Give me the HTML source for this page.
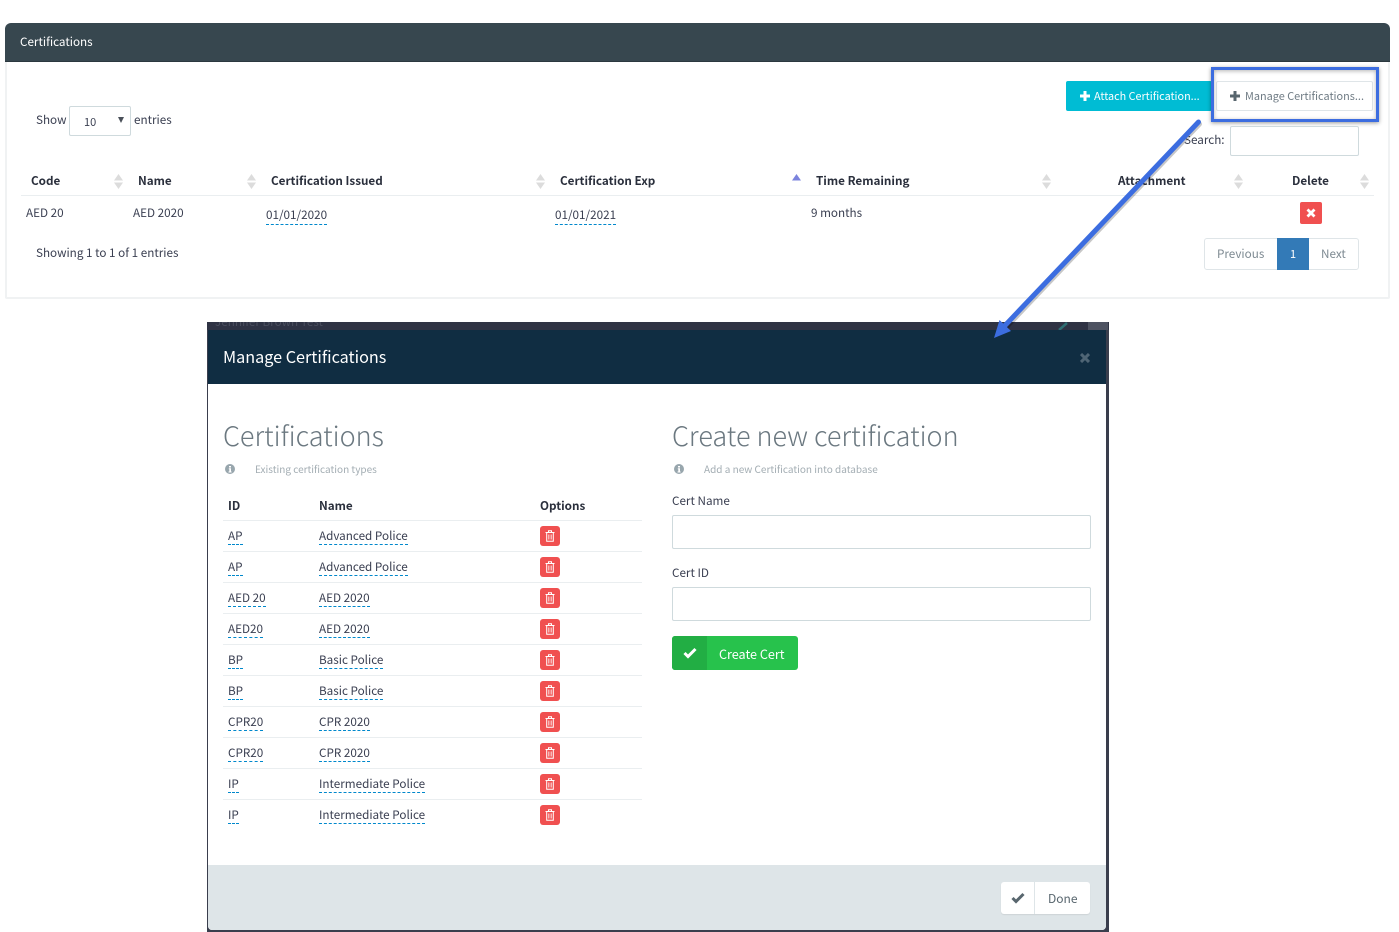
<!DOCTYPE html>
<html><head><meta charset="utf-8"><title>Certifications</title>
<style>
html,body{margin:0;padding:0;background:#fff;width:1399px;height:932px;overflow:hidden}
body{position:relative;font-family:"Noto Sans CJK SC","Liberation Sans",sans-serif;font-size:11.7px;color:#3a3f51}
.a{position:absolute;box-sizing:border-box}
.t{position:absolute;white-space:nowrap;line-height:18px;height:18px}
.b{font-weight:700;color:#2a2f3c}
.u{border-bottom:1px dashed #0088cc;height:18px}
.v{line-height:17px;height:17px}
.l{position:absolute;height:1px;background:#eaeef0}
.g{color:#a3adb3;font-size:10px}
.h{font-size:27px;line-height:40px;height:40px;color:#6b7880;font-weight:300}
.tr{position:absolute;left:540px;width:20px;height:20px;background:#f05050;border-radius:3px}
svg{position:absolute;display:block}
</style></head><body>

<div class="a" style="left:5px;top:23px;width:1385px;height:276px;border:2px solid #f0f2f3;border-top:0;border-radius:6px 6px 2px 2px"></div>
<div class="a" style="left:5px;top:23px;width:1385px;height:39px;background:#37474f;border-radius:6px 6px 0 0;border-bottom:1px solid #2b383f"></div>
<div class="t" style="left:20px;top:32.500px;color:#fff">Certifications</div>

<div class="t" style="left:36px;top:110.500px">Show</div>
<div class="a" style="left:69px;top:106px;width:62px;height:30px;border:1px solid #cfdadd;border-radius:2px"></div>
<div class="t" style="left:84px;top:113px;font-size:11px">10</div>
<svg style="left:118px;top:117px" width="7" height="7"><path d="M0 0H6L3 6Z" fill="#4a5059"/></svg>
<div class="t" style="left:134px;top:110.500px">entries</div>

<div class="a" style="left:1066px;top:81px;width:146px;height:30px;background:#00bcd4;border-radius:2px"></div>
<svg style="left:1080px;top:91px" width="10" height="10"><path d="M3.500 0H6.500V3.500H10V6.500H6.500V10H3.500V6.500H0V3.500H3.500Z" fill="#fff"/></svg>
<div class="t" style="left:1094px;top:87px;color:#fff;font-size:10.800px">Attach Certification...</div>
<div class="a" style="left:1216px;top:81px;width:157px;height:30px;background:#fff;border:1px solid #dfe5e8;border-radius:2px"></div>
<svg style="left:1230px;top:91px" width="10" height="10"><path d="M3.500 0H6.500V3.500H10V6.500H6.500V10H3.500V6.500H0V3.500H3.500Z" fill="#58666e"/></svg>
<div class="t" style="left:1245px;top:87px;color:#6f7b84;font-size:10.900px">Manage Certifications...</div>
<div class="a" style="left:1211px;top:67px;width:168px;height:55px;border:3px solid #3c6de0;box-shadow:0 1px 4px rgba(0,0,0,.4),inset 0 1px 4px rgba(0,0,0,.3)"></div>

<div class="t" style="left:1184px;top:130.500px">Search:</div>
<div class="a" style="left:1230px;top:126px;width:129px;height:30px;border:1px solid #cfdadd;border-radius:2px"></div>

<div class="t b" style="left:31px;top:171.500px">Code</div>
<div class="t b" style="left:138px;top:171.500px">Name</div>
<div class="t b" style="left:271px;top:171.500px">Certification Issued</div>
<div class="t b" style="left:560px;top:171.500px">Certification Exp</div>
<div class="t b" style="left:816px;top:171.500px">Time Remaining</div>
<div class="t b" style="left:1118px;top:171.500px">Attachment</div>
<div class="t b" style="left:1292px;top:171.500px">Delete</div>
<svg style="left:114px;top:174px" width="9" height="15"><path d="M4.500 0L9 6.500H0ZM0 8.500H9L4.500 15Z" fill="#dcdcdc"/></svg>
<svg style="left:247px;top:174px" width="9" height="15"><path d="M4.500 0L9 6.500H0ZM0 8.500H9L4.500 15Z" fill="#dcdcdc"/></svg>
<svg style="left:536px;top:174px" width="9" height="15"><path d="M4.500 0L9 6.500H0ZM0 8.500H9L4.500 15Z" fill="#dcdcdc"/></svg>
<svg style="left:792px;top:174px" width="9" height="7"><path d="M4.500 0L9 6.500H0Z" fill="#7b83dd"/></svg>
<svg style="left:1042px;top:174px" width="9" height="15"><path d="M4.500 0L9 6.500H0ZM0 8.500H9L4.500 15Z" fill="#dcdcdc"/></svg>
<svg style="left:1234px;top:174px" width="9" height="15"><path d="M4.500 0L9 6.500H0ZM0 8.500H9L4.500 15Z" fill="#dcdcdc"/></svg>
<svg style="left:1360px;top:174px" width="9" height="15"><path d="M4.500 0L9 6.500H0ZM0 8.500H9L4.500 15Z" fill="#dcdcdc"/></svg>
<div class="l" style="left:21px;top:195px;width:1353px"></div>

<div class="t" style="left:26px;top:203.500px">AED 20</div>
<div class="t" style="left:133px;top:203.500px">AED 2020</div>
<div class="t u" style="left:266px;top:206px">01/01/2020</div>
<div class="t u" style="left:555px;top:206px">01/01/2021</div>
<div class="t" style="left:811px;top:203.500px">9 months</div>
<div class="a" style="left:1300px;top:202px;width:22px;height:22px;background:#f05050;border-radius:2px"></div>
<svg style="left:1306px;top:208px" width="10" height="10"><path d="M1.500 1.500L8.500 8.500M8.500 1.500L1.500 8.500" stroke="#fff" stroke-width="2.800" fill="none"/></svg>
<div class="t" style="left:36px;top:243.500px">Showing 1 to 1 of 1 entries</div>

<div class="a" style="left:1204px;top:238px;width:155px;height:32px;border:1px solid #dfe5e8;border-radius:3px"></div>
<div class="t" style="left:1217px;top:244.500px;color:#7e8a92">Previous</div>
<div class="a" style="left:1277px;top:238px;width:32px;height:32px;background:#337ab7"></div>
<div class="t" style="left:1290px;top:245px;color:#fff;font-size:11px">1</div>
<div class="t" style="left:1321px;top:244.500px;color:#7e8a92">Next</div>

<!-- Modal -->
<div class="a" style="left:207px;top:322px;width:902px;height:610px;background:#3a3e4d"></div>
<div class="a" style="left:207px;top:322px;width:902px;height:8px;background:#2f3344;overflow:hidden"><div class="t" style="left:8px;top:-9px;color:#4a4e5e;font-size:11.700px">Jennifer Brown Test</div></div>
<div class="a" style="left:1088px;top:322px;width:20px;height:8px;background:#4d5261"></div>
<svg style="left:1058px;top:322px" width="14" height="8"><path d="M1 8L9 1" stroke="#2f6f73" stroke-width="2.500"/></svg>
<div class="a" style="left:208px;top:330px;width:898px;height:600px;background:#fff;border-radius:0 0 4px 4px;overflow:hidden">
  <div class="a" style="left:0;top:0;width:898px;height:54px;background:#102d42"></div>
  <div class="a" style="left:0;top:535px;width:898px;height:65px;background:#dee5e8"></div>
</div>
<div class="t" style="left:223px;top:343px;height:26px;line-height:26px;color:#fff;font-size:16.200px">Manage Certifications</div>
<svg style="left:1080px;top:353px" width="10" height="10"><path d="M1 1L9 9M9 1L1 9" stroke="#4f6575" stroke-width="3" fill="none"/></svg>

<div class="t h" style="left:223px;top:415px">Certifications</div>
<svg style="left:225px;top:464px" width="10" height="10"><circle cx="5" cy="5" r="5" fill="#98a6ad"/><path d="M4 2h2v1.500H4zM3.800 4.300H6V7.500h.6V8.500H3.500V7.500h.8V5.300H3.800z" fill="#fff"/></svg>
<div class="t g" style="left:255px;top:460px">Existing certification types</div>

<div class="t b" style="left:228px;top:496.500px">ID</div>
<div class="t b" style="left:319px;top:496.500px">Name</div>
<div class="t b" style="left:540px;top:496.500px">Options</div>
<div class="l" style="left:223px;top:520px;width:419px"></div>
<div class="l" style="left:223px;top:551px;width:419px"></div>
<div class="l" style="left:223px;top:582px;width:419px"></div>
<div class="l" style="left:223px;top:613px;width:419px"></div>
<div class="l" style="left:223px;top:644px;width:419px"></div>
<div class="l" style="left:223px;top:675px;width:419px"></div>
<div class="l" style="left:223px;top:706px;width:419px"></div>
<div class="l" style="left:223px;top:737px;width:419px"></div>
<div class="l" style="left:223px;top:768px;width:419px"></div>
<div class="l" style="left:223px;top:799px;width:419px"></div>

<div class="t u v" style="left:228px;top:527px">AP</div><div class="t u v" style="left:319px;top:527px">Advanced Police</div>
<div class="t u v" style="left:228px;top:558px">AP</div><div class="t u v" style="left:319px;top:558px">Advanced Police</div>
<div class="t u v" style="left:228px;top:589px">AED 20</div><div class="t u v" style="left:319px;top:589px">AED 2020</div>
<div class="t u v" style="left:228px;top:620px">AED20</div><div class="t u v" style="left:319px;top:620px">AED 2020</div>
<div class="t u v" style="left:228px;top:651px">BP</div><div class="t u v" style="left:319px;top:651px">Basic Police</div>
<div class="t u v" style="left:228px;top:682px">BP</div><div class="t u v" style="left:319px;top:682px">Basic Police</div>
<div class="t u v" style="left:228px;top:713px">CPR20</div><div class="t u v" style="left:319px;top:713px">CPR 2020</div>
<div class="t u v" style="left:228px;top:744px">CPR20</div><div class="t u v" style="left:319px;top:744px">CPR 2020</div>
<div class="t u v" style="left:228px;top:775px">IP</div><div class="t u v" style="left:319px;top:775px">Intermediate Police</div>
<div class="t u v" style="left:228px;top:806px">IP</div><div class="t u v" style="left:319px;top:806px">Intermediate Police</div>

<div class="tr" style="top:526px"><svg style="left:5px;top:4px" width="10" height="12"><path d="M0.500 2.500H9.500M3.500 2V.700H6.500V2M1.700 2.500V11.300H8.300V2.500" stroke="#fff" fill="none"/><path d="M3.500 4.500V9.500M5 4.500V9.500M6.500 4.500V9.500" stroke="#fbd0d0" stroke-width=".8"/></svg></div>
<div class="tr" style="top:557px"><svg style="left:5px;top:4px" width="10" height="12"><path d="M0.500 2.500H9.500M3.500 2V.700H6.500V2M1.700 2.500V11.300H8.300V2.500" stroke="#fff" fill="none"/><path d="M3.500 4.500V9.500M5 4.500V9.500M6.500 4.500V9.500" stroke="#fbd0d0" stroke-width=".8"/></svg></div>
<div class="tr" style="top:588px"><svg style="left:5px;top:4px" width="10" height="12"><path d="M0.500 2.500H9.500M3.500 2V.700H6.500V2M1.700 2.500V11.300H8.300V2.500" stroke="#fff" fill="none"/><path d="M3.500 4.500V9.500M5 4.500V9.500M6.500 4.500V9.500" stroke="#fbd0d0" stroke-width=".8"/></svg></div>
<div class="tr" style="top:619px"><svg style="left:5px;top:4px" width="10" height="12"><path d="M0.500 2.500H9.500M3.500 2V.700H6.500V2M1.700 2.500V11.300H8.300V2.500" stroke="#fff" fill="none"/><path d="M3.500 4.500V9.500M5 4.500V9.500M6.500 4.500V9.500" stroke="#fbd0d0" stroke-width=".8"/></svg></div>
<div class="tr" style="top:650px"><svg style="left:5px;top:4px" width="10" height="12"><path d="M0.500 2.500H9.500M3.500 2V.700H6.500V2M1.700 2.500V11.300H8.300V2.500" stroke="#fff" fill="none"/><path d="M3.500 4.500V9.500M5 4.500V9.500M6.500 4.500V9.500" stroke="#fbd0d0" stroke-width=".8"/></svg></div>
<div class="tr" style="top:681px"><svg style="left:5px;top:4px" width="10" height="12"><path d="M0.500 2.500H9.500M3.500 2V.700H6.500V2M1.700 2.500V11.300H8.300V2.500" stroke="#fff" fill="none"/><path d="M3.500 4.500V9.500M5 4.500V9.500M6.500 4.500V9.500" stroke="#fbd0d0" stroke-width=".8"/></svg></div>
<div class="tr" style="top:712px"><svg style="left:5px;top:4px" width="10" height="12"><path d="M0.500 2.500H9.500M3.500 2V.700H6.500V2M1.700 2.500V11.300H8.300V2.500" stroke="#fff" fill="none"/><path d="M3.500 4.500V9.500M5 4.500V9.500M6.500 4.500V9.500" stroke="#fbd0d0" stroke-width=".8"/></svg></div>
<div class="tr" style="top:743px"><svg style="left:5px;top:4px" width="10" height="12"><path d="M0.500 2.500H9.500M3.500 2V.700H6.500V2M1.700 2.500V11.300H8.300V2.500" stroke="#fff" fill="none"/><path d="M3.500 4.500V9.500M5 4.500V9.500M6.500 4.500V9.500" stroke="#fbd0d0" stroke-width=".8"/></svg></div>
<div class="tr" style="top:774px"><svg style="left:5px;top:4px" width="10" height="12"><path d="M0.500 2.500H9.500M3.500 2V.700H6.500V2M1.700 2.500V11.300H8.300V2.500" stroke="#fff" fill="none"/><path d="M3.500 4.500V9.500M5 4.500V9.500M6.500 4.500V9.500" stroke="#fbd0d0" stroke-width=".8"/></svg></div>
<div class="tr" style="top:805px"><svg style="left:5px;top:4px" width="10" height="12"><path d="M0.500 2.500H9.500M3.500 2V.700H6.500V2M1.700 2.500V11.300H8.300V2.500" stroke="#fff" fill="none"/><path d="M3.500 4.500V9.500M5 4.500V9.500M6.500 4.500V9.500" stroke="#fbd0d0" stroke-width=".8"/></svg></div>

<div class="t h" style="left:672px;top:415px">Create new certification</div>
<svg style="left:674px;top:464px" width="10" height="10"><circle cx="5" cy="5" r="5" fill="#98a6ad"/><path d="M4 2h2v1.500H4zM3.800 4.300H6V7.500h.6V8.500H3.500V7.500h.8V5.300H3.800z" fill="#fff"/></svg>
<div class="t g" style="left:704px;top:460px">Add a new Certification into database</div>

<div class="t" style="left:672px;top:491.500px">Cert Name</div>
<div class="a" style="left:672px;top:515px;width:419px;height:34px;border:1px solid #cfdadd;border-radius:2px"></div>
<div class="t" style="left:672px;top:563.500px">Cert ID</div>
<div class="a" style="left:672px;top:587px;width:419px;height:34px;border:1px solid #cfdadd;border-radius:2px"></div>

<div class="a" style="left:672px;top:636px;width:126px;height:34px;background:#27c24c;border-radius:3px;overflow:hidden"><div class="a" style="left:0;top:0;width:35px;height:34px;background:#22ae44"></div></div>
<svg style="left:683px;top:647px" width="14" height="12"><path d="M1.500 6L5 9.500L12.500 2" stroke="#fff" stroke-width="3" fill="none"/></svg>
<div class="t" style="left:719px;top:644.500px;color:#fff;font-size:12.600px">Create Cert</div>

<div class="a" style="left:1001px;top:882px;width:89px;height:32px;background:#fff;border-radius:3px;box-shadow:0 1px 1px rgba(0,0,0,.08)"></div>
<div class="a" style="left:1034px;top:882px;width:1px;height:32px;background:#dee5e8"></div>
<svg style="left:1011px;top:892px" width="14" height="12"><path d="M1.500 6L5 9.500L12.500 2" stroke="#58666e" stroke-width="3" fill="none"/></svg>
<div class="t" style="left:1048px;top:889.500px;color:#58666e;font-size:12px">Done</div>

<!-- Arrow -->
<svg style="left:0;top:0" width="1399" height="932">
  <path d="M1198.500 122L1005 325.500" stroke="rgba(0,0,0,.22)" stroke-width="5" stroke-linecap="round" fill="none" transform="translate(1 2)"/>
  <path d="M1198.500 122L1005 325.500" stroke="#3c6de0" stroke-width="5" stroke-linecap="round" fill="none"/>
  <path d="M994 338L999.500 320L1011 331Z" fill="#3c6de0"/>
</svg>
</body></html>
